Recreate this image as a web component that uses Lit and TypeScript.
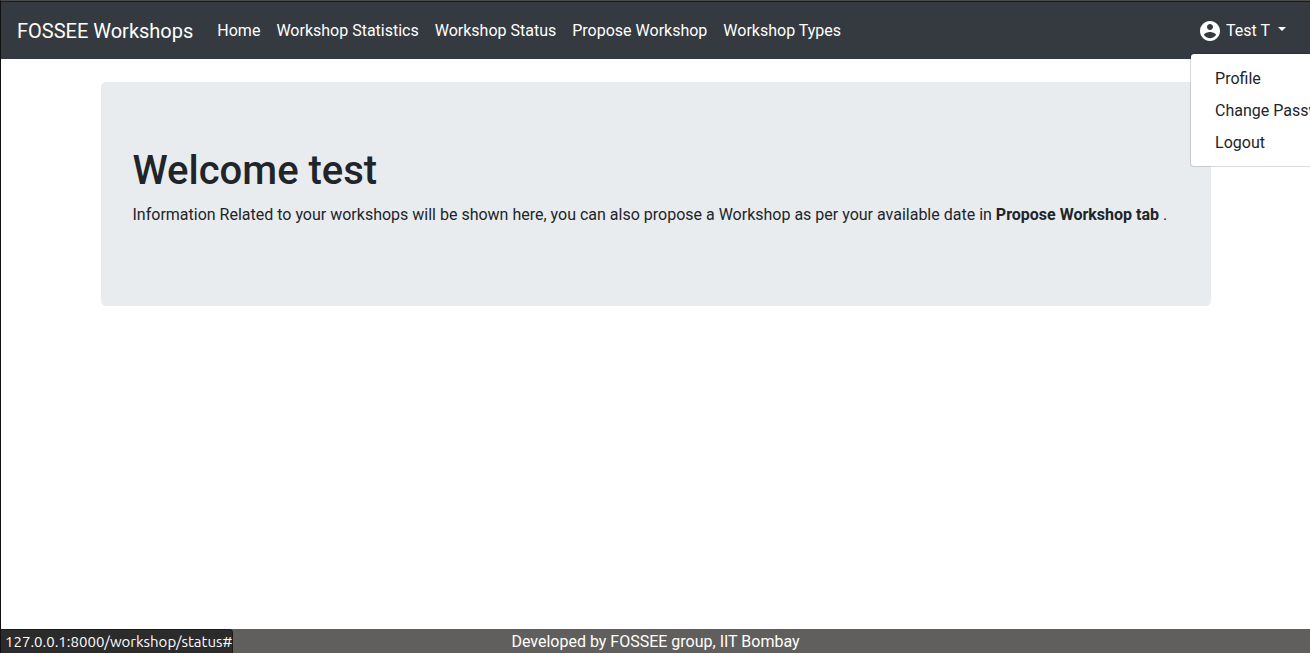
import { LitElement, html, css } from "lit";
import { customElement, property } from "lit/decorators.js";

@customElement("site-navbar")
class SiteNavbar extends LitElement {
  @property() user = "";

  private links = ["Home", "Workshop Statistics", "Workshop Status", "Propose Workshop", "Workshop Types"];
  private menu = ["Profile", "Change Password", "Logout"];

  static styles = css`
    :host {
      display: block;
    }
    nav {
      display: flex;
      align-items: center;
      padding: 8px 16px;
      background: #343a40;
      border-top: 1px solid #1b1b1b;
    }
    a {
      color: #fff;
      text-decoration: none;
    }
    .brand {
      margin-right: 16px;
      font-size: 20px;
      line-height: 30px;
    }
    ul {
      display: flex;
      flex: 1;
      margin: 0;
      padding: 0;
      list-style: none;
    }
    .link {
      display: block;
      padding: 8px;
    }
    .account {
      position: relative;
    }
    .toggle {
      display: flex;
      align-items: center;
      padding: 9px 8px 8px;
      border: 0;
      background: none;
      color: #fff;
      font: inherit;
      cursor: pointer;
    }
    .toggle svg {
      margin-right: 4px;
    }
    .caret {
      margin: 0 0 4px 8px;
      border: 4px solid transparent;
      border-top-color: #fff;
      border-bottom: 0;
    }
    .menu {
      position: absolute;
      top: 100%;
      left: 0;
      z-index: 1;
      box-sizing: border-box;
      min-width: 160px;
      margin-top: 2px;
      padding: 9px 0 7px;
      background: #fff;
      background-clip: padding-box;
      border: 1px solid rgba(0, 0, 0, 0.15);
      border-radius: 4px;
    }
    .item {
      display: block;
      padding: 4px 24px;
      color: #212529;
      white-space: nowrap;
    }
  `;

  render() {
    return html`
      <nav>
        <a class="brand" href="#">FOSSEE Workshops</a>
        <ul>
          ${this.links.map((l) => html`<li><a class="link" href="#">${l}</a></li>`)}
        </ul>
        <div class="account">
          <button class="toggle" aria-haspopup="true" aria-expanded="true">
            <svg width="24" height="24" viewBox="0 0 24 24" fill="#fff" aria-hidden="true">
              <path d="M12 2C6.48 2 2 6.48 2 12s4.48 10 10 10 10-4.48 10-10S17.52 2 12 2zm0 3c1.66 0 3 1.34 3 3s-1.34 3-3 3-3-1.34-3-3 1.34-3 3-3zm0 14.2c-2.5 0-4.71-1.28-6-3.22.03-1.99 4-3.08 6-3.08 1.99 0 5.97 1.09 6 3.08-1.29 1.94-3.5 3.22-6 3.22z" />
            </svg>
            ${this.user}
            <span class="caret"></span>
          </button>
          <div class="menu">
            ${this.menu.map((m) => html`<a class="item" href="#">${m}</a>`)}
          </div>
        </div>
      </nav>
    `;
  }
}

@customElement("app-root")
class AppRoot extends LitElement {
  static styles = css`
    :host {
      display: flex;
      flex-direction: column;
      box-sizing: border-box;
      min-height: 100vh;
      overflow: hidden;
      border-top: 1px solid #4a4a4a;
      border-left: 1px solid #111;
      background: #fff;
      color: #212529;
      font: 16px/24px Roboto, sans-serif;
    }
    main {
      flex: 1;
      box-sizing: border-box;
      width: 100%;
      max-width: 1140px;
      margin: 0 auto;
      padding: 23px 15px;
    }
    .jumbotron {
      padding: 65px 32px 63px;
      background: #e9ecef;
      border-radius: 5px;
    }
    h1 {
      margin: 0 0 8px;
      font-size: 40px;
      line-height: 48px;
      font-weight: 500;
    }
    p {
      margin: 0 0 16px;
    }
    footer {
      position: relative;
      padding-top: 2px;
      background: #605f5d;
      color: #fff;
      line-height: 22px;
      text-align: center;
    }
    .status {
      position: absolute;
      left: 0;
      bottom: 0;
      padding: 0 0 0 4px;
      background: #2b2b2b;
      border-top: 1px solid #1b1b1b;
      border-right: 1px solid #1b1b1b;
      border-top-right-radius: 4px;
      font: 15px/23px Ubuntu, "Noto Sans", sans-serif;
    }
  `;

  render() {
    return html`
      <site-navbar user="Test T"></site-navbar>
      <main>
        <section class="jumbotron">
          <h1>Welcome test</h1>
          <p>
            Information Related to your workshops will be shown here, you can also propose a Workshop as per your
            available date in <b>Propose Workshop tab</b> .
          </p>
        </section>
      </main>
      <footer>
        Developed by FOSSEE group, IIT Bombay
        <div class="status">127.0.0.1:8000/workshop/status#</div>
      </footer>
    `;
  }
}
